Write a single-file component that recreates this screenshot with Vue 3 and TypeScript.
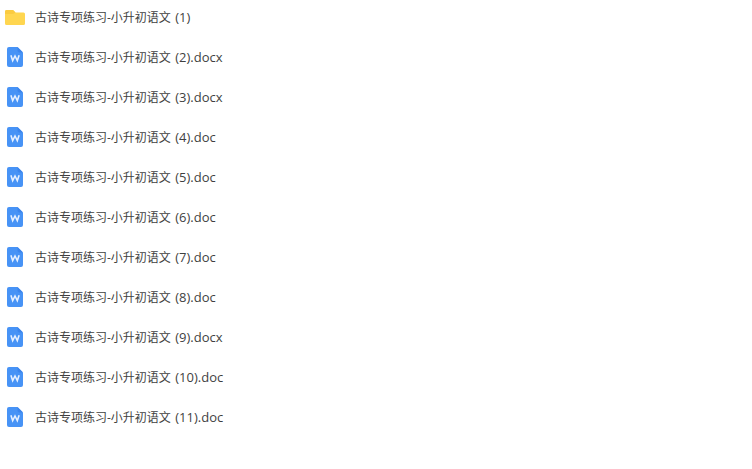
<script setup lang="ts">
const base = '古诗专项练习-小升初语文'

interface FileRow {
  suffix: string
  folder: boolean
}

const exts = ['', '.docx', '.docx', '.doc', '.doc', '.doc', '.doc', '.doc', '.docx', '.doc', '.doc']
const files: FileRow[] = exts.map((ext, i) => ({
  suffix: ` (${i + 1})${ext}`,
  folder: i === 0,
}))
</script>

<template>
  <div class="list">
    <div v-for="f in files" :key="f.suffix" class="row">
      <div class="icon">
        <svg v-if="f.folder" width="20" height="15" viewBox="0 0 20 15">
          <path d="M1.500 0h6c.4 0 .7.100 1 .400L10.500 2.500h8A1.500 1.500 0 0 1 20 4v9.500a1.500 1.500 0 0 1-1.500 1.500h-17A1.500 1.500 0 0 1 0 13.500v-12A1.500 1.500 0 0 1 1.500 0z" fill="#ffd650" />
          <path d="M0 4V1.500A1.500 1.500 0 0 1 1.500 0h6c.4 0 .7.100 1 .400L10.500 2.500 9 3.600c-.3.300-.6.400-1 .400z" fill="#fbcb40" />
        </svg>
        <svg v-else width="16" height="20" viewBox="0 0 16 20">
          <path d="M2 0h8.500L16 5.500V18a2 2 0 0 1-2 2H2a2 2 0 0 1-2-2V2a2 2 0 0 1 2-2z" fill="#4793f6" />
          <path d="M10.500 0L16 5.500h-3.500a2 2 0 0 1-2-2z" fill="#3c85ec" />
          <path d="M3.900 8.200l1.800 5.500L8 9l2.300 4.700 1.800-5.500" fill="none" stroke="#e4efff" stroke-width="1.600" />
        </svg>
      </div>
      <span class="name">{{ base }}<span class="suffix">{{ f.suffix }}</span></span>
    </div>
  </div>
</template>

<style>
html,
body {
  margin: 0;
  background: #fff;
}
</style>

<style scoped>
.list {
  display: flex;
  flex-direction: column;
  gap: 6px;
  width: 752px;
  height: 469px;
  overflow: hidden;
}

.row {
  display: flex;
  align-items: center;
  height: 34px;
  flex: none;
}

.icon {
  display: flex;
  align-items: center;
  justify-content: center;
  flex: none;
  width: 30px;
  margin-right: 5px;
}

.name {
  font-family: "Open Sans", "Noto Sans CJK SC", sans-serif;
  font-size: 12px;
  color: #3f3f3f;
  white-space: pre;
}

.suffix {
  font-size: 13px;
  word-spacing: 1px;
}
</style>
